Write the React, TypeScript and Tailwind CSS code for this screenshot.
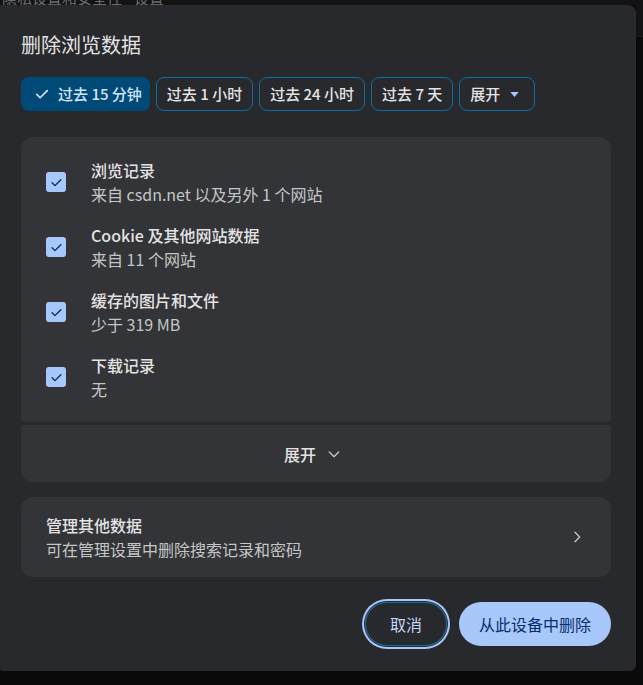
import React from 'react';

const font = { fontFamily: '"Noto Sans CJK SC", "Noto Sans", sans-serif' };

function Check({ className }: { className?: string }) {
  return (
    <svg viewBox="0 0 24 24" className={className} fill="none" stroke="currentColor" strokeWidth={2.2} strokeLinecap="round" strokeLinejoin="round">
      <path d="M5 12.5l4.5 4.5L19 7.5" />
    </svg>
  );
}

function Chip({ label, selected, caret }: { label: string; selected?: boolean; caret?: boolean }) {
  if (selected) {
    return (
      <button className="h-[34px] flex items-center gap-[7px] pl-[12px] pr-[8px] rounded-lg bg-[#004a77] text-[#d3e3fd] text-[15px] font-medium">
        <Check className="w-[18px] h-[18px]" />
        {label}
      </button>
    );
  }
  return (
    <button className="h-[34px] flex items-center gap-[10px] px-[10px] rounded-lg border border-[#0c6ea0] text-[#e3e3e3] text-[15px] font-medium">
      {label}
      {caret && (
        <svg viewBox="0 0 10 6" className="w-[9px] h-[5px] mr-[5px]" fill="#a8c7fa">
          <path d="M0 0h10L5 6z" />
        </svg>
      )}
    </button>
  );
}

function Row({ title, sub }: { title: string; sub: string }) {
  return (
    <div className="flex items-center">
      <div className="w-[20px] h-[20px] rounded-[3px] bg-[#a8c7fa] flex items-center justify-center ml-[25px] mr-[25px]">
        <Check className="w-[15px] h-[15px] text-[#0b2a62]" />
      </div>
      <div className="flex flex-col">
        <span className="text-[16px] leading-[24px] font-medium text-[#e3e3e3]">{title}</span>
        <span className="text-[16px] leading-[24px] text-[#c4c7c5]">{sub}</span>
      </div>
    </div>
  );
}

export default function App() {
  return (
    <div className="w-[643px] h-[685px] bg-[#0a0a0a] flex flex-col overflow-hidden" style={font}>
      {/* window behind the dialog, only its lower edge shows */}
      <div className="h-[5px] bg-[#131315] overflow-hidden shrink-0">
        <div className="text-[15px] leading-[15px] -mt-[10px] text-[#6b6b6b] pl-[2px]">隐私设置和安全性 - 设置</div>
      </div>
      <div className="flex flex-1">
        <div className="w-[636px] h-[666px] bg-[#28292d] rounded-tr-lg rounded-br-md rounded-bl-[3px] shrink-0 pl-[21px] pr-[25px] pt-[26px] flex flex-col">
          <h1 className="text-[20px] leading-[28px] text-[#e3e3e3]">删除浏览数据</h1>

          <div className="flex gap-[6px] mt-[18px]">
            <Chip label="过去 15 分钟" selected />
            <Chip label="过去 1 小时" />
            <Chip label="过去 24 小时" />
            <Chip label="过去 7 天" />
            <Chip label="展开" caret />
          </div>

          <div className="mt-[26px] bg-[#333438] rounded-t-xl rounded-b-[4px] pt-[21px] pb-[21px] flex flex-col gap-[17px]">
            <Row title="浏览记录" sub="来自 csdn.net 以及另外 1 个网站" />
            <Row title="Cookie 及其他网站数据" sub="来自 11 个网站" />
            <Row title="缓存的图片和文件" sub="少于 319 MB" />
            <Row title="下载记录" sub="无" />
          </div>

          <div className="mt-[3px] h-[57px] bg-[#333438] rounded-t-[4px] rounded-b-xl flex items-center justify-center gap-[10px] pr-[6px]">
            <span className="text-[16px] font-medium text-[#e3e3e3]">展开</span>
            <svg viewBox="0 0 24 24" className="w-[16px] h-[16px] text-[#c4c7c5]" fill="none" stroke="currentColor" strokeWidth={2} strokeLinecap="round" strokeLinejoin="round">
              <path d="M5 9l7 7 7-7" />
            </svg>
          </div>

          <div className="mt-[15px] h-[80px] bg-[#333438] rounded-xl flex items-center pl-[25px] pr-[26px]">
            <div className="flex flex-col flex-1">
              <span className="text-[16px] leading-[24px] font-medium text-[#e3e3e3]">管理其他数据</span>
              <span className="text-[16px] leading-[24px] text-[#c4c7c5]">可在管理设置中删除搜索记录和密码</span>
            </div>
            <svg viewBox="0 0 24 24" className="w-[16px] h-[16px] text-[#c4c7c5]" fill="none" stroke="currentColor" strokeWidth={2} strokeLinecap="round" strokeLinejoin="round">
              <path d="M9 5l7 7-7 7" />
            </svg>
          </div>

          <div className="mt-[25px] flex justify-end items-center gap-3">
            <button className="h-[44px] px-[24px] rounded-full border border-[#0c6ea0] text-[16px] text-[#c2d8f8] ring-2 ring-[#a8c7fa] ring-offset-1 ring-offset-[#28292d]">
              取消
            </button>
            <button className="h-[44px] px-[20px] rounded-full bg-[#a8c7fa] text-[16px] text-[#062e6f]">
              从此设备中删除
            </button>
          </div>
        </div>
        <div className="flex-1 flex flex-col">
          <div className="h-[32px] bg-[#131315] border-b border-[#1c1c1e]" />
        </div>
      </div>
    </div>
  );
}
